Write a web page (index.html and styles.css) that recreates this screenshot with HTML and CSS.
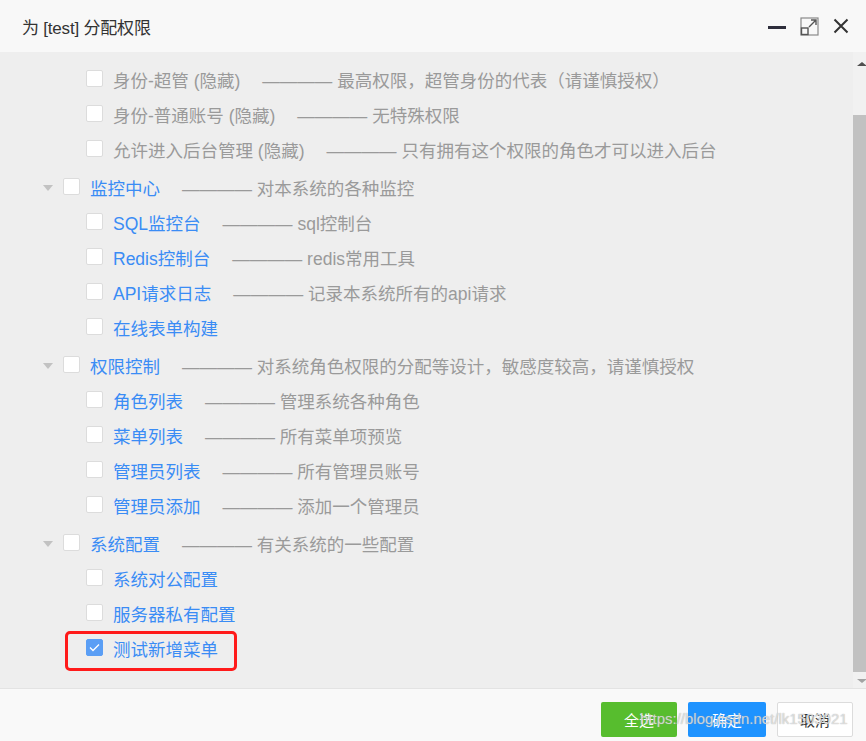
FILE: index.html
```html
<!DOCTYPE html>
<html lang="zh-CN">
<head>
<meta charset="utf-8">
<title>为 [test] 分配权限</title>
<link rel="stylesheet" href="styles.css">
</head>
<body>
<div class="dialog">
  <div class="titlebar">
    <div class="title">为 [test] 分配权限</div>
    <div class="tools">
      <svg class="ico" width="18" height="18" viewBox="0 0 18 18"><rect x="0" y="9" width="18" height="3" fill="#2e2e3c"/></svg>
      <svg class="ico" width="19" height="19" viewBox="0 0 19 19"><rect x="1" y="1" width="17" height="17" fill="none" stroke="#8a8a8a" stroke-width="1.2"/><rect x="1.5" y="11" width="6.5" height="6.5" fill="none" stroke="#555" stroke-width="1.4"/><path d="M9 10 L16 3 M11 3 H16 V8" fill="none" stroke="#555" stroke-width="1.4"/></svg>
      <svg class="ico" width="16" height="16" viewBox="0 0 16 16"><path d="M1.5 1.5 L14.5 14.5 M14.5 1.5 L1.5 14.5" stroke="#333" stroke-width="2"/></svg>
    </div>
  </div>
  <div class="main">
    <div class="content">
      <ul class="tree">
        <li class="row child"><span class="cb"></span><span class="label muted">身份-超管 (隐藏)</span><span class="desc">———— 最高权限，超管身份的代表（请谨慎授权）</span></li>
        <li class="row child"><span class="cb"></span><span class="label muted">身份-普通账号 (隐藏)</span><span class="desc">———— 无特殊权限</span></li>
        <li class="row child"><span class="cb"></span><span class="label muted">允许进入后台管理 (隐藏)</span><span class="desc">———— 只有拥有这个权限的角色才可以进入后台</span></li>

        <li class="row parent"><span class="caret"></span><span class="cb"></span><span class="label">监控中心</span><span class="desc">———— 对本系统的各种监控</span></li>
        <li class="row child"><span class="cb"></span><span class="label">SQL监控台</span><span class="desc">———— sql控制台</span></li>
        <li class="row child"><span class="cb"></span><span class="label">Redis控制台</span><span class="desc">———— redis常用工具</span></li>
        <li class="row child"><span class="cb"></span><span class="label">API请求日志</span><span class="desc">———— 记录本系统所有的api请求</span></li>
        <li class="row child"><span class="cb"></span><span class="label">在线表单构建</span></li>

        <li class="row parent"><span class="caret"></span><span class="cb"></span><span class="label">权限控制</span><span class="desc">———— 对系统角色权限的分配等设计，敏感度较高，请谨慎授权</span></li>
        <li class="row child"><span class="cb"></span><span class="label">角色列表</span><span class="desc">———— 管理系统各种角色</span></li>
        <li class="row child"><span class="cb"></span><span class="label">菜单列表</span><span class="desc">———— 所有菜单项预览</span></li>
        <li class="row child"><span class="cb"></span><span class="label">管理员列表</span><span class="desc">———— 所有管理员账号</span></li>
        <li class="row child"><span class="cb"></span><span class="label">管理员添加</span><span class="desc">———— 添加一个管理员</span></li>

        <li class="row parent"><span class="caret"></span><span class="cb"></span><span class="label">系统配置</span><span class="desc">———— 有关系统的一些配置</span></li>
        <li class="row child"><span class="cb"></span><span class="label">系统对公配置</span></li>
        <li class="row child"><span class="cb"></span><span class="label">服务器私有配置</span></li>
        <li class="row child marked"><span class="cb checked"><svg width="11" height="9" viewBox="0 0 11 9"><path d="M1 4.5 L4 7.5 L10 1.5" fill="none" stroke="#fff" stroke-width="1.3"/></svg></span><span class="label">测试新增菜单</span><span class="annot"></span></li>
      </ul>
    </div>
    <div class="scrollbar">
      <div class="arrow up"></div>
      <div class="track"><div class="thumb"></div></div>
      <div class="arrow down"></div>
    </div>
  </div>
  <div class="footer">
    <button class="btn green">全选</button>
    <button class="btn blue">确定</button>
    <button class="btn plain">取消</button>
    <span class="watermark">https://blog.csdn.net/lk1503021</span>
  </div>
</div>
</body>
</html>
```

FILE: styles.css
```css
* { box-sizing: border-box; }
html, body { margin: 0; padding: 0; }
body {
  width: 866px;
  height: 741px;
  overflow: hidden;
  font-family: "Liberation Sans", "Noto Sans CJK SC", sans-serif;
  background: #fff;
}
.dialog {
  width: 866px;
  height: 741px;
  display: flex;
  flex-direction: column;
}
.titlebar {
  height: 52px;
  flex: none;
  background: #f8f8f8;
  display: flex;
  align-items: center;
  justify-content: space-between;
  padding: 0 17px 0 22px;
}
.title {
  font-size: 17px;
  color: #333;
  letter-spacing: -0.2px;
}
.tools {
  display: flex;
  align-items: center;
  gap: 14px;
}
.ico { display: block; }

.main {
  flex: 1;
  display: flex;
  min-height: 0;
}
.content {
  flex: 1;
  background: #eeeeee;
  overflow: hidden;
}
.tree {
  list-style: none;
  margin: 0;
  padding: 10px 0 0 0;
}
.row {
  height: 35px;
  display: flex;
  align-items: center;
  font-size: 17.5px;
  white-space: nowrap;
  position: relative;
}
.row.parent {
  padding-left: 43px;
  margin-top: 3px;
}
.row.child {
  padding-left: 86px;
}
.caret {
  width: 0;
  height: 0;
  border-left: 5px solid transparent;
  border-right: 5px solid transparent;
  border-top: 6px solid #c2c2c2;
  margin-right: 10px;
  margin-top: 1px;
}
.cb {
  width: 17px;
  height: 17px;
  background: #fff;
  border: 1px solid #dcdcdc;
  border-radius: 2px;
  margin-right: 10px;
  margin-top: -3px;
  flex: none;
  display: flex;
  align-items: center;
  justify-content: center;
}
.cb.checked {
  background: #5a9ef5;
  border-color: #5a9ef5;
}
.cb svg { display: block; }
.label {
  color: #3a8cf5;
}
.label.muted {
  color: #9a9a9a;
}
.desc {
  color: #9a9a9a;
  margin-left: 22px;
}
.annot {
  position: absolute;
  left: 65px;
  top: 0px;
  width: 172px;
  height: 40px;
  border: 3px solid #ff1a1a;
  border-radius: 5px;
}

.scrollbar {
  width: 13px;
  flex: none;
  background: #f1f1f1;
  display: flex;
  flex-direction: column;
}
.arrow {
  height: 14px;
  flex: none;
  display: flex;
  justify-content: center;
  align-items: center;
}
.arrow.up { height: 20px; padding-top: 4px; }
.arrow.up::after {
  content: "";
  border-left: 5px solid transparent;
  border-right: 5px solid transparent;
  border-bottom: 4px solid #505050;
  margin-left: 4px;
}
.arrow.down::after {
  content: "";
  border-left: 5px solid transparent;
  border-right: 5px solid transparent;
  border-top: 4px solid #a3a3a3;
  margin-left: 4px;
}
.track {
  flex: 1;
  padding-top: 43px;
  display: flex;
  flex-direction: column;
}
.thumb {
  flex: 1;
  background: #c1c1c1;
  margin-bottom: 2px;
}

.footer {
  height: 53px;
  flex: none;
  border-top: 1px solid #e3e3e3;
  background: #f9f9f9;
  display: flex;
  justify-content: flex-end;
  align-items: flex-start;
  padding: 13px 13px 0 0;
  gap: 11px;
  position: relative;
}
.btn {
  height: 35px;
  width: 77px;
  border-radius: 2px;
  font-family: "Liberation Sans", "Noto Sans CJK SC", sans-serif;
  font-size: 15px;
  border: 1px solid transparent;
  padding: 0;
  cursor: pointer;
}
.btn.green { background: #57bd2e; color: #fff; width: 76px; }
.btn.blue { background: #1e93ff; color: #fff; width: 78px; }
.btn.plain { background: #fff; color: #333; border-color: #dcdcdc; width: 76px; }
.watermark {
  position: absolute;
  left: 640px;
  top: 21px;
  font-size: 15px;
  color: rgba(255, 255, 255, 0.6);
  text-shadow: 0 0 1px #999;
  white-space: nowrap;
  pointer-events: none;
}
```
